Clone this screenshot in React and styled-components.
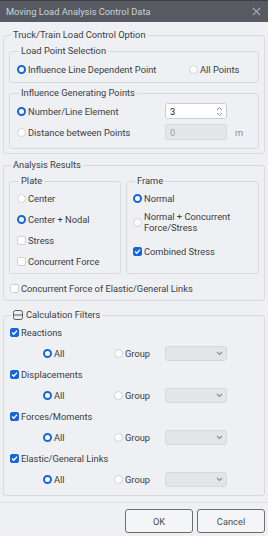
import React from "react";
import styled, { createGlobalStyle } from "styled-components";

const GlobalStyle = createGlobalStyle`
  html, body {
    margin: 0;
    padding: 0;
    background: #eef0f3;
  }
  body {
    font-family: Roboto, "Noto Sans", sans-serif;
    font-size: 9.3px;
    color: #3a3d42;
  }
  * {
    box-sizing: border-box;
  }
`;

const Window = styled.div`
  width: 268px;
  height: 536px;
  display: flex;
  flex-direction: column;
  background: #eef0f3;
  overflow: hidden;
`;

const TitleBar = styled.div`
  height: 22px;
  flex-shrink: 0;
  display: flex;
  align-items: center;
  justify-content: space-between;
  padding: 0 6px;
  background: #575b61;
  border-top: 1px solid #3c3f44;
  color: #cfd1d5;
  font-size: 9.3px;
`;

const Close = styled.span`
  display: flex;
  width: 9px;
  height: 9px;
  margin-right: 1px;
`;

const Body = styled.div`
  flex: 1;
  padding: 7px 3px 0;
  display: flex;
  flex-direction: column;
`;

const Group = styled.fieldset`
  margin: ${(p) => p.$mt || 0}px 0 0;
  padding: ${(p) => p.$pad || "0 5px 4px"};
  border: 1px solid #d7dade;
  border-radius: 3px;
  min-width: 0;
  display: flex;
  flex-direction: column;
  gap: ${(p) => p.$gap || 0}px;
`;

const Legend = styled.legend`
  padding: 0 2px;
  margin-left: ${(p) => p.$ml || 2}px;
  height: 12px;
  line-height: 12px;
  color: #3a3d42;
  display: flex;
  align-items: center;
  gap: 3px;
`;

const Row = styled.label`
  height: ${(p) => p.$h || 16}px;
  display: flex;
  align-items: center;
  gap: 2px;
  padding-left: ${(p) => p.$indent || 0}px;
  margin-top: ${(p) => p.$mt || 0}px;
  line-height: 11px;
  white-space: nowrap;
`;

const TwoCol = styled.div`
  display: grid;
  grid-template-columns: ${(p) => p.$cols};
  align-items: center;
  height: 16px;
`;

const Radio = styled.span`
  width: 9px;
  height: 9px;
  border-radius: 50%;
  flex-shrink: 0;
  background: #fff;
  border: ${(p) => (p.$on ? "2.4px solid #1565e0" : "1px solid #cfd2d7")};
`;

const Box = styled.span`
  width: 9px;
  height: 9px;
  border-radius: 2px;
  flex-shrink: 0;
  display: flex;
  align-items: center;
  justify-content: center;
  background: ${(p) => (p.$on ? "#1565e0" : "#fff")};
  border: 1px solid ${(p) => (p.$on ? "#1565e0" : "#cfd2d7")};
`;

const Columns = styled.div`
  display: grid;
  grid-template-columns: 112px 133px;
  gap: 5px;
  margin-top: 4px;
  align-items: stretch;
`;

const Input = styled.div`
  width: 62px;
  height: ${(p) => p.$h || 16}px;
  border: 1px solid ${(p) => (p.$disabled ? "#d4d7db" : "#c9ccd1")};
  border-radius: 3px;
  background: ${(p) => (p.$disabled ? "#e3e5e8" : "#fff")};
  color: ${(p) => (p.$disabled ? "#9a9ea4" : "#222")};
  display: flex;
  align-items: center;
  justify-content: space-between;
  padding: 0 3px 0 4px;
`;

const Unit = styled.span`
  margin-left: 6px;
  color: #8a8e94;
`;

const FilterRow = styled.div`
  height: 16px;
  display: grid;
  grid-template-columns: 71px 51px 63px;
  align-items: center;
  padding-left: 34px;
`;

const Footer = styled.div`
  flex-shrink: 0;
  border-top: 1px solid #dcdfe3;
  margin-top: 6px;
  padding: 6px 3px 4px;
  display: flex;
  justify-content: flex-end;
  gap: 4px;
`;

const Button = styled.button`
  width: 68px;
  height: 24px;
  border: 1px solid #6b6e73;
  border-radius: 3px;
  background: #f4f5f7;
  font-family: inherit;
  font-size: 9.3px;
  color: #4a4d52;
  padding: 0;
`;

const Check = () => (
  <svg width="7" height="7" viewBox="0 0 7 7">
    <path d="M1 3.6 L2.8 5.3 L6 1.6" fill="none" stroke="#fff" strokeWidth="1.4" />
  </svg>
);

const Spin = () => (
  <svg width="7" height="11" viewBox="0 0 7 11">
    <path d="M1 4 L3.5 1.5 L6 4 M1 7 L3.5 9.5 L6 7" fill="none" stroke="#8a8e94" strokeWidth="1" />
  </svg>
);

const Chevron = () => (
  <svg width="7" height="5" viewBox="0 0 7 5">
    <path d="M1 1 L3.5 3.5 L6 1" fill="none" stroke="#8a8e94" strokeWidth="1.1" />
  </svg>
);

const CollapseIcon = () => (
  <svg width="10" height="10" viewBox="0 0 10 10">
    <rect x="0.5" y="0.5" width="9" height="9" rx="2" fill="none" stroke="#55595f" strokeWidth="1" />
    <path d="M0.5 5 H9.5" stroke="#55595f" strokeWidth="1" />
  </svg>
);

const RadioItem = ({ on, children, ...rest }) => (
  <Row {...rest}>
    <Radio $on={on} />
    <span>{children}</span>
  </Row>
);

const CheckItem = ({ on, children, ...rest }) => (
  <Row {...rest}>
    <Box $on={on}>{on && <Check />}</Box>
    <span>{children}</span>
  </Row>
);

const filters = ["Reactions", "Displacements", "Forces/Moments", "Elastic/General Links"];

export default function App() {
  return (
    <>
      <GlobalStyle />
      <Window>
        <TitleBar>
          <span>Moving Load Analysis Control Data</span>
          <Close>
            <svg width="9" height="9" viewBox="0 0 9 9">
              <path d="M1 1 L8 8 M8 1 L1 8" stroke="#a9acb1" strokeWidth="1.1" />
            </svg>
          </Close>
        </TitleBar>
        <Body>
          <Group>
            <Legend>Truck/Train Load Control Option</Legend>
            <Group $mt={4} $pad="4px 7px 5px">
              <Legend>Load Point Selection</Legend>
              <TwoCol $cols="172px auto">
                <RadioItem on>Influence Line Dependent Point</RadioItem>
                <RadioItem>All Points</RadioItem>
              </TwoCol>
            </Group>
            <Group $mt={4} $pad="4px 7px 8px" $gap={5}>
              <Legend>Influence Generating Points</Legend>
              <TwoCol $cols="148px auto">
                <RadioItem on>Number/Line Element</RadioItem>
                <Input>
                  <span>3</span>
                  <Spin />
                </Input>
              </TwoCol>
              <TwoCol $cols="148px auto">
                <RadioItem>Distance between Points</RadioItem>
                <Row>
                  <Input $disabled>
                    <span>0</span>
                  </Input>
                  <Unit>m</Unit>
                </Row>
              </TwoCol>
            </Group>
          </Group>

          <Group $mt={5}>
            <Legend>Analysis Results</Legend>
            <Columns>
              <Group $pad="3px 7px 4px" $gap={5}>
                <Legend>Plate</Legend>
                <RadioItem>Center</RadioItem>
                <RadioItem on>Center + Nodal</RadioItem>
                <CheckItem>Stress</CheckItem>
                <CheckItem>Concurrent Force</CheckItem>
              </Group>
              <Group $pad="3px 6px 4px">
                <Legend>Frame</Legend>
                <RadioItem on>Normal</RadioItem>
                <RadioItem $h={22} $mt={5}>
                  Normal + Concurrent
                  <br />
                  Force/Stress
                </RadioItem>
                <CheckItem on $mt={10}>
                  Combined Stress
                </CheckItem>
              </Group>
            </Columns>
            <CheckItem $mt={6} $indent={1}>
              Concurrent Force of Elastic/General Links
            </CheckItem>
          </Group>

          <Group $mt={8} $pad="3px 5px 8px" $gap={5}>
            <Legend $ml={0}>
              <CollapseIcon />
              Calculation Filters
            </Legend>
            {filters.map((name) => (
              <React.Fragment key={name}>
                <CheckItem on $indent={1}>
                  {name}
                </CheckItem>
                <FilterRow>
                  <RadioItem on>All</RadioItem>
                  <RadioItem>Group</RadioItem>
                  <Input $disabled $h={15}>
                    <span />
                    <Chevron />
                  </Input>
                </FilterRow>
              </React.Fragment>
            ))}
          </Group>
        </Body>
        <Footer>
          <Button>OK</Button>
          <Button>Cancel</Button>
        </Footer>
      </Window>
    </>
  );
}
